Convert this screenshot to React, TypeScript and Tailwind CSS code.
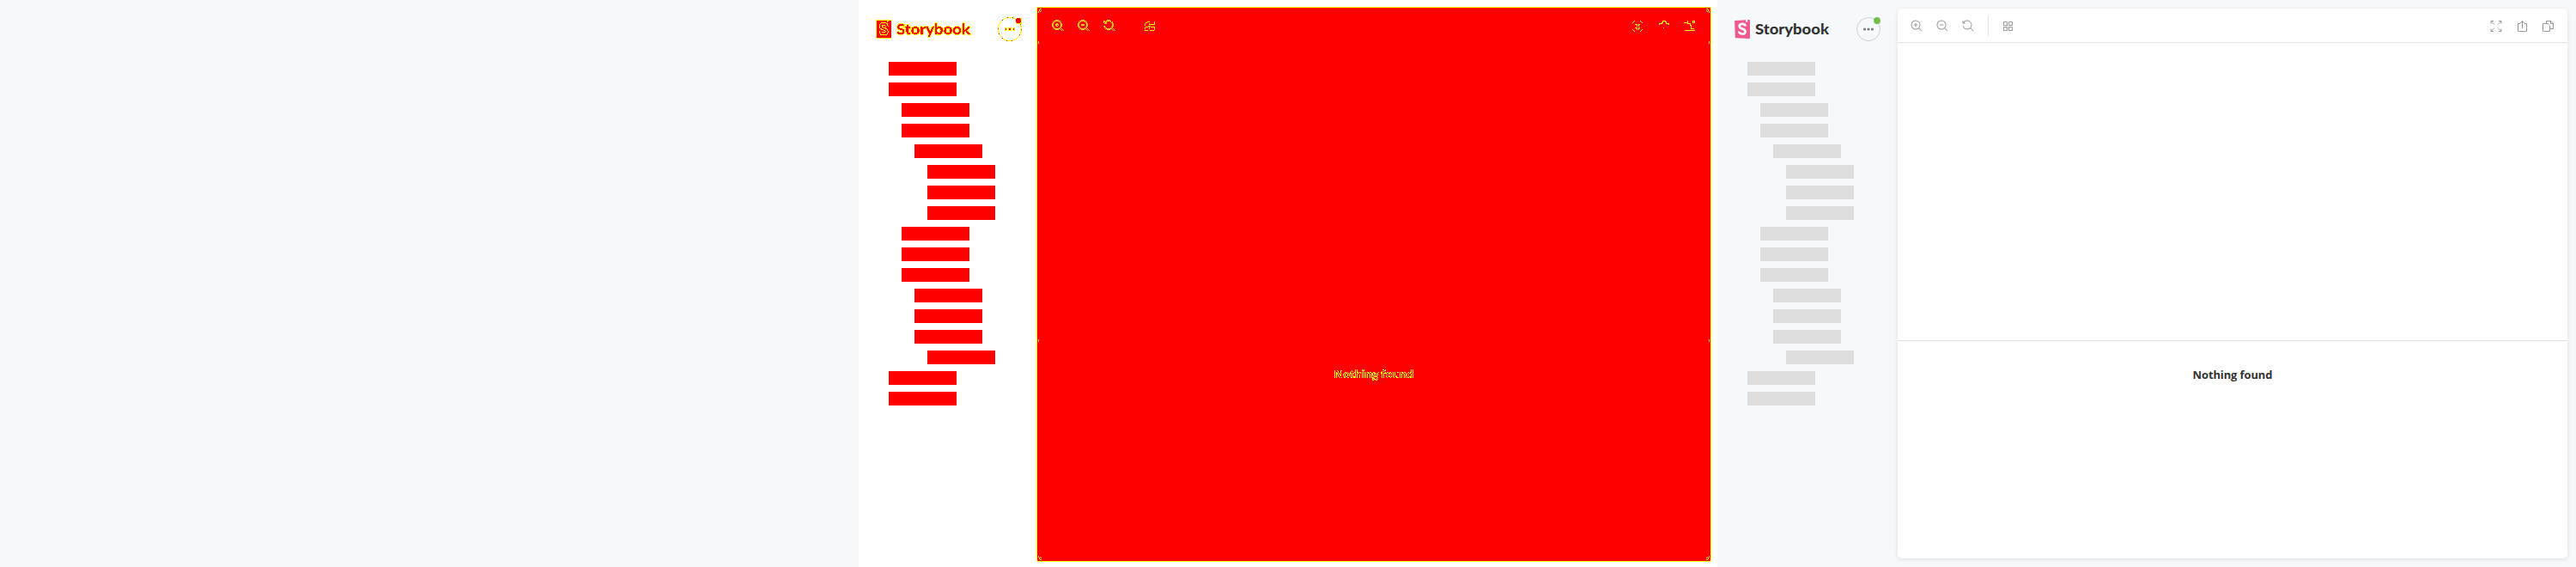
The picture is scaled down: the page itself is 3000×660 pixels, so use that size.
import React from "react";

const levels = [0, 0, 1, 1, 2, 3, 3, 3, 1, 1, 1, 2, 2, 2, 3, 0, 0];
const indents = ["ml-0", "ml-[15px]", "ml-[30px]", "ml-[45px]"];

const lens =
  "M9.544 10.206a5.5 5.5 0 11.662-.662.5.5 0 01.148.102l3 3a.5.5 0 01-.708.708l-3-3a.5.5 0 01-.102-.148zM10.5 6a4.5 4.5 0 10-9 0 4.5 4.5 0 009 0z";
const plus =
  "M6 3.5a.5.5 0 01.5.5v1.5H8a.5.5 0 010 1H6.5V8a.5.5 0 01-1 0V6.5H4a.5.5 0 010-1h1.5V4a.5.5 0 01.5-.5z";
const minus = "M4 5.5a.5.5 0 000 1h4a.5.5 0 000-1H4z";
const reset =
  "M1.5 2.837V1.5a.5.5 0 00-1 0V4a.5.5 0 00.5.5h2.5a.5.5 0 000-1H2.258a4.5 4.5 0 11-.496 4.016.5.5 0 10-.942.337 5.502 5.502 0 008.724 2.353.5.5 0 00.102.148l3 3a.5.5 0 00.708-.708l-3-3a.5.5 0 00-.148-.102A5.5 5.5 0 101.5 2.837z";

function Icon({ d, line, diff }: { d?: string; line?: string; diff?: boolean }) {
  return (
    <svg
      width="14"
      height="14"
      viewBox="0 0 14 14"
      className="block shrink-0 overflow-visible"
      shapeRendering={diff ? "crispEdges" : "auto"}
    >
      {d && (
        <path
          d={d}
          fillRule="evenodd"
          fill={diff ? "#ff0000" : "#999999"}
          stroke={diff ? "#ffff00" : "none"}
          strokeWidth={diff ? 0.8 : 0}
        />
      )}
      {line && <path d={line} fill="none" stroke={diff ? "#ffff00" : "#999999"} strokeWidth="1" />}
    </svg>
  );
}

const letterS =
  "M12.6 7.5C12.6 5.4 11.3 4.9 9.2 4.9C7.1 4.9 5.7 5.8 5.7 7.6C5.7 11.3 12.7 10 12.7 13.6C12.7 15.6 11.4 16.5 9.2 16.5C6.8 16.5 5.4 15.6 5.5 13.5";

function Mark({ diff }: { diff?: boolean }) {
  return (
    <svg
      width="18"
      height="22"
      viewBox="0 0 18 22"
      className="block shrink-0"
      shapeRendering={diff ? "crispEdges" : "auto"}
    >
      <path
        d="M0.1 1.7Q0 1 .8 .9L17 0Q18 0 18 .9V21Q18 22 17 22L1.5 21.3Q.8 21.2.8 20.5Z"
        fill={diff ? "#ff0000" : "#f1588c"}
        stroke={diff ? "#ffff00" : "none"}
      />
      <path d="M13.1 .3L15.2 .1V3L14.2 2.2L13 3Z" fill={diff ? "#ffff00" : "#ffffff"} />
      <path d={letterS} fill="none" stroke={diff ? "#ffff00" : "#ffffff"} strokeWidth={diff ? 4 : 2.7} />
      {diff && <path d={letterS} fill="none" stroke="#ff0000" strokeWidth="2" />}
    </svg>
  );
}

function Menu({ diff }: { diff?: boolean }) {
  return (
    <svg
      width="28"
      height="28"
      viewBox="0 0 28 28"
      className="block shrink-0"
      shapeRendering={diff ? "crispEdges" : "auto"}
    >
      <circle cx="14" cy="14" r="13.5" fill="none" stroke={diff ? "#ffff00" : "#cdd1d4"} />
      {diff && <circle cx="14" cy="14" r="13.5" fill="none" stroke="#ff0000" strokeDasharray="1 5" />}
      {diff ? (
        <>
          <path d="M8 12h12v4H8z" fill="#ffff00" />
          <path d="M11 12h1v4h-1zM16 12h1v4h-1z" fill="#ffffff" />
          <path d="M9 13h1v2H9zM13 13h2v2h-2zM18 13h1v2h-1z" fill="#ff0000" />
        </>
      ) : (
        [9.5, 14, 18.5].map((x) => <circle key={x} cx={x} cy="14" r="1.55" fill="#73777a" />)
      )}
      {diff && <path d="M20.5 7.5V.5H27.5V7.5Z" fill="#ffff00" />}
      <circle cx="24" cy="4" r={diff ? 3.3 : 4} fill={diff ? "#ff0000" : "#7abc4e"} />
    </svg>
  );
}

function Sidebar({ diff }: { diff?: boolean }) {
  return (
    <aside className="flex h-full w-[210px] shrink-0 flex-col">
      <header className="flex h-[72px] shrink-0 items-start pl-5 pt-5">
        <div className="flex pt-[3px]">
          <Mark diff={diff} />
        </div>
        <svg width="92" height="30" viewBox="0 0 92 30" className="ml-[5px] block shrink-0 overflow-visible">
          <text
            x="1"
            y="20.4"
            textLength="86"
            lengthAdjust="spacingAndGlyphs"
            fontFamily="Lato, sans-serif"
            fontWeight="900"
            fontSize="17.5"
            fill={diff ? "#ff0000" : "#333333"}
            stroke={diff ? "#ffff00" : "none"}
            strokeWidth={diff ? 1.6 : 0}
            strokeLinejoin="round"
            paintOrder={diff ? "fill" : "stroke"}
            filter={diff ? "url(#hard)" : undefined}
          >
            Storybook
          </text>
          {diff && (
            <text
              x="1"
              y="20.4"
              textLength="86"
              lengthAdjust="spacingAndGlyphs"
              fontFamily="Lato, sans-serif"
              fontWeight="700"
              fontSize="17.5"
              fill="#ff0000"
              filter="url(#hard)"
            >
              Storybook
            </text>
          )}
        </svg>
        <div className="ml-auto mr-5 flex">
          <Menu diff={diff} />
        </div>
      </header>
      <div className="flex flex-col gap-2 pl-[35px]">
        {levels.map((level, i) => (
          <div
            key={i}
            className={`h-4 w-[79px] ${indents[level]} ${diff ? "bg-[#ff0000]" : "bg-[#dddddd]"}`}
          />
        ))}
      </div>
    </aside>
  );
}

const expand =
  "M1 4.5V1.5H4M1.5 2L5 5.5M10 1.5H13V4.5M12.5 2L9 5.5M1 10.5V13.5H4M1.5 13L5 9.5M10 13.5H13V10.5M12.5 13L9 9.5";
const share = "M4 4.5H1.5V13.5H11.5V4.5H9M6.5 10V1.5M4 4L6.5 1.5L9 4";
const copy = "M.5 4.5H6.2L8.5 6.8V13.5H.5ZM4.5 4V1.5H10L12.5 4V10.5H9M9.5 1.5V4.5H12.5";
const grid = "M1.5 2.5h4v4h-4zM7.5 2.5h4v4h-4zM1.5 8.5h4v4h-4zM7.5 8.5h4v4h-4z";
const gridDiff =
  "M4 2.5h3M2 3.5h2M1.5 4v3M12.5 2v4M7 5.5h6M2 8.5h3M1.5 9v2M6.5 4v2M5 7.5h3M6.5 8v3M8 8.5h4M12.5 8v4M1 12.5h4M7 12.5h5";

function Toolbar({ diff }: { diff?: boolean }) {
  return (
    <div className="flex w-full items-start">
      <div className="flex gap-4">
        <Icon d={lens + plus} diff={diff} />
        <Icon d={lens + minus} diff={diff} />
        <Icon d={reset} diff={diff} />
      </div>
      <div className={`-mt-[5px] ml-4 h-6 w-px ${diff ? "" : "bg-[#e2e2e2]"}`} />
      <div className="ml-4">
        <Icon line={diff ? gridDiff : grid} diff={diff} />
      </div>
      <div className="ml-auto flex">
        <div className="mr-[17px]">
          <Icon
            line={
              diff
                ? "M1 4L4 1M10 1L13 4M1 11L4 14M10 14L13 11M4 5.5h2v2M10 5.5H8v2M4 9.5h2v2M10 9.5H8v2"
                : expand
            }
            diff={diff}
          />
        </div>
        <div className="mr-[16px]">
          <Icon
            line={diff ? "M1 5.5V4.5H4L5 3.5V2.5L6 1.5H8L9 2.5V3.5L10 4.5H12V5.5M6.5 9v1" : share}
            diff={diff}
          />
        </div>
        <Icon
          line={diff ? "M0 3.5h4M4.5 1v3h3v2h1v5M1 12.5H13M10.5 1.5h2v2h-2zM9 10.5h3" : copy}
          diff={diff}
        />
      </div>
    </div>
  );
}

function Message({ diff }: { diff?: boolean }) {
  return (
    <svg width="100" height="24" viewBox="0 0 100 24" className="block overflow-visible">
      <text
        x="50"
        y="17"
        textAnchor="middle"
        textLength="93"
        fontFamily="'Open Sans', sans-serif"
        fontWeight="700"
        fontSize="13"
        fill={diff ? "#ff0000" : "#333333"}
        stroke={diff ? "#ffff00" : "none"}
        strokeWidth={diff ? 0.6 : 0}
        filter={diff ? "url(#hard)" : undefined}
      >
        Nothing found
      </text>
    </svg>
  );
}

function CornerTrace({ className }: { className: string }) {
  return (
    <svg width="8" height="8" viewBox="0 0 8 8" className={`block ${className}`} shapeRendering="crispEdges">
      <path d="M1 4h1v2H1zM2 2h1v2H2zM3 1h2v1H3zM3 4h1v1H3zM4 3h1v1H4z" fill="#ffff00" />
    </svg>
  );
}

export default function App() {
  return (
    <div className="flex h-[660px] w-[3000px] overflow-hidden bg-[#f6f9fc]">
      <section className="w-[1000px] shrink-0" />

      <section className="flex w-[1000px] shrink-0 bg-white">
        <svg width="0" height="0" className="absolute">
          <filter id="hard" colorInterpolationFilters="sRGB">
            <feComponentTransfer>
              <feFuncR type="discrete" tableValues="0 1" />
              <feFuncG type="discrete" tableValues="0 1" />
              <feFuncA type="discrete" tableValues="0 1" />
            </feComponentTransfer>
          </filter>
        </svg>
        <Sidebar diff />
        <main className="-ml-[3px] mt-2 flex h-[646px] w-[786px] flex-col rounded-[2px] border border-[#ffff00] bg-[#ff0000]">
          <div className="flex h-[8px] justify-between">
            <CornerTrace className="" />
            <CornerTrace className="-scale-x-100" />
          </div>
          <div className="-mt-[8px] flex h-[39px] pl-[17px] pr-[17px] pt-[14px]">
            <Toolbar diff />
          </div>
          <div className="flex h-[3px] justify-between px-px">
            <div className="h-[3px] w-px bg-[#ffff00]" />
            <div className="h-[3px] w-px bg-[#ffff00]" />
          </div>
          <div className="h-[344px] shrink-0" />
          <div className="flex h-[3px] justify-between px-px">
            <div className="h-[3px] w-px bg-[#ffff00]" />
            <div className="h-[3px] w-px bg-[#ffff00]" />
          </div>
          <div className="-mt-[2px] flex grow justify-center pt-[27px]">
            <Message diff />
          </div>
          <div className="flex h-[8px] justify-between">
            <CornerTrace className="-scale-y-100" />
            <CornerTrace className="-scale-100" />
          </div>
        </main>
      </section>

      <section className="flex w-[1000px] shrink-0">
        <Sidebar />
        <main className="mt-2.5 flex h-[640px] w-[780px] flex-col overflow-hidden rounded-[5px] bg-white shadow-[0_1px_5px_0_rgba(0,0,0,0.1)]">
          <div className="flex h-10 shrink-0 border-b border-[#e2e2e2] pl-[15px] pr-[15px] pt-[13px]">
            <Toolbar />
          </div>
          <div className="h-[346px] shrink-0" />
          <div className="flex grow justify-center border-t border-[#e2e2e2] pt-[27px]">
            <Message />
          </div>
        </main>
      </section>
    </div>
  );
}
